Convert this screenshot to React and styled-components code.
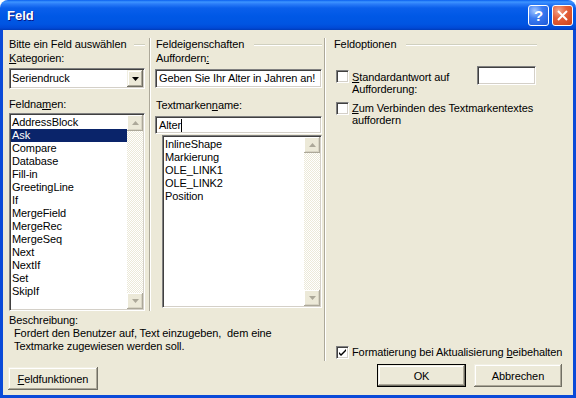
import React from 'react';
import styled, { createGlobalStyle, css } from 'styled-components';

const GlobalStyle = createGlobalStyle`
  html, body {
    margin: 0;
    padding: 0;
    background: #fff;
  }
  body {
    font-family: "Liberation Sans", Arial, sans-serif;
    font-size: 11px;
    letter-spacing: -0.1px;
    color: #000;
  }
  * {
    box-sizing: border-box;
  }
`;

// classic 3D edges
const sunken = css`
  border-style: solid;
  border-width: 1px;
  border-color: #808080 #fff #fff #808080;
  box-shadow: inset 1px 1px #404040, inset -1px -1px #d4d0c8;
  padding: 1px;
`;

const raised = css`
  background: #ece9d8;
  box-shadow: inset -1px -1px #716f64, inset 1px 1px #f1efe2,
    inset -2px -2px #aca899, inset 2px 2px #fff;
`;

const Window = styled.div`
  width: 576px;
  height: 398px;
  display: flex;
  flex-direction: column;
  border-radius: 8px 8px 0 0;
  overflow: hidden;
`;

const TitleBar = styled.div`
  height: 30px;
  flex-shrink: 0;
  display: flex;
  align-items: center;
  padding: 0 3px 0 7px;
  background: linear-gradient(
    to bottom,
    #0a5fef 0,
    #3d95ff 2px,
    #2a7cf8 4px,
    #0a5feb 8px,
    #0058e6 16px,
    #0055e2 24px,
    #0049d6 28px,
    #003bb8 30px
  );
`;

const Title = styled.div`
  flex: 1;
  color: #fff;
  font-weight: bold;
  font-size: 13px;
  letter-spacing: 0;
  text-shadow: 1px 1px #0a1883;
  margin-top: 1px;
`;

const CaptionButton = styled.div`
  width: 21px;
  height: 21px;
  margin-left: 3px;
  border: 1px solid #fff;
  border-radius: 3px;
  display: flex;
  align-items: center;
  justify-content: center;
  color: #fff;
  font-weight: bold;
  font-size: 15px;
  background: ${(p) =>
    p.$close
      ? 'radial-gradient(circle at 30% 25%, #f3a78d 0, #e5603a 40%, #c9411a 100%)'
      : 'radial-gradient(circle at 30% 25%, #a3c6ff 0, #3c7cf2 40%, #1b57d8 100%)'};
`;

const Body = styled.div`
  flex: 1;
  background: #ece9d8;
  border: 3px solid #0a4ad8;
  border-top: 0;
  padding: 8px 6px 0 6px;
  display: grid;
  grid-template-columns: 136px 10px 167px 12px 1fr;
  grid-template-rows: 273px 50px auto;
`;

const VSep = styled.div`
  grid-column: ${(p) => p.$col};
  grid-row: ${(p) => p.$rows};
  justify-self: start;
  margin-left: ${(p) => p.$offset}px;
  width: 2px;
  border-left: 1px solid #aca899;
  border-right: 1px solid #fff;
`;

const Column = styled.div`
  display: flex;
  flex-direction: column;
  grid-column: ${(p) => p.$col};
  grid-row: ${(p) => p.$rows || 1};
  min-width: 0;
`;

const GroupHeader = styled.div`
  display: flex;
  align-items: center;
  height: 13px;
  line-height: 13px;
  white-space: nowrap;
  padding-left: ${(p) => p.$pad || 0}px;
  margin-right: ${(p) => p.$trim || 0}px;

  &::after {
    content: '';
    flex: 1;
    margin-left: ${(p) => p.$gap}px;
    border-top: 1px solid #d0d0bf;
    border-bottom: 1px solid #fff;
  }
`;

const Label = styled.div`
  line-height: 13px;
  height: 13px;
  margin-top: ${(p) => p.$mt}px;
  padding-left: ${(p) => p.$pad || 0}px;
  white-space: nowrap;
`;

const Key = styled.span`
  text-decoration: underline;
  text-underline-offset: 1px;
`;

const Combo = styled.div`
  ${sunken};
  background: #fff;
  height: 21px;
  margin-top: 3px;
  display: flex;
`;

const ComboText = styled.div`
  flex: 1;
  line-height: 17px;
  padding-left: 1px;
`;

const DropButton = styled.div`
  ${raised};
  width: 16px;
  display: flex;
  align-items: center;
  justify-content: center;
`;

const TextField = styled.div`
  ${sunken};
  background: #fff;
  height: ${(p) => p.$h}px;
  width: ${(p) => (p.$w ? `${p.$w}px` : 'auto')};
  margin-top: ${(p) => p.$mt}px;
  margin-right: ${(p) => p.$mr || 0}px;
  line-height: ${(p) => p.$h - 4}px;
  padding-left: 3px;
  white-space: nowrap;
  overflow: hidden;
  flex-shrink: 0;
`;

const Caret = styled.span`
  display: inline-block;
  width: 1px;
  height: 13px;
  background: #000;
  vertical-align: -3px;
`;

const ListBox = styled.div`
  ${sunken};
  background: #fff;
  height: ${(p) => p.$h}px;
  margin-top: ${(p) => p.$mt}px;
  margin-left: ${(p) => p.$ml || 0}px;
  display: flex;
`;

const Items = styled.div`
  flex: 1;
  padding-top: 1px;
`;

const Item = styled.div`
  height: 13px;
  line-height: 13px;
  padding-left: ${(p) => p.$pad}px;
  white-space: nowrap;
  ${(p) =>
    p.$selected &&
    css`
      background: #0a246a;
      color: #fff;
    `}
`;

const ScrollBar = styled.div`
  width: 16px;
  display: flex;
  flex-direction: column;
`;

const ScrollButton = styled.div`
  height: 16px;
  background: #ece9d8;
  box-shadow: inset -1px -1px #aca899, inset 1px 1px #fff,
    inset -2px -2px #d8d4c4;
  display: flex;
  align-items: center;
  justify-content: center;
`;

const Track = styled.div`
  flex: 1;
  background: repeating-conic-gradient(#ece9d8 0 25%, #fff 0 50%) 0 0 / 2px
    2px;
`;

const Description = styled.div`
  grid-column: 1 / span 3;
  grid-row: 2;
  padding-top: 3px;
  line-height: 13px;
`;

const DescText = styled.div`
  padding-left: 5px;
  white-space: pre;
`;

const OptionRow = styled.div`
  display: flex;
  align-items: flex-start;
  margin-top: ${(p) => p.$mt};
  margin-bottom: ${(p) => p.$mb || 0}px;
  padding-left: 2px;
`;

const CheckBox = styled.div`
  ${sunken};
  width: 13px;
  height: 13px;
  padding: 0;
  background: #fff;
  flex-shrink: 0;
  margin-top: ${(p) => p.$mt || 0}px;
  display: flex;
  align-items: center;
  justify-content: center;
`;

const OptionText = styled.div`
  flex: 1;
  margin-left: 3px;
  margin-top: ${(p) => p.$mt || 0}px;
  line-height: ${(p) => p.$lh}px;
  white-space: nowrap;
`;

const ButtonRow = styled.div`
  grid-column: 1 / -1;
  grid-row: 3;
  display: flex;
  align-items: flex-start;
`;

const Button = styled.div`
  ${raised};
  width: ${(p) => p.$w}px;
  height: 23px;
  margin-top: ${(p) => p.$mt}px;
  margin-left: ${(p) => p.$ml || 0}px;
  margin-right: ${(p) => p.$mr || 0}px;
  display: flex;
  align-items: center;
  justify-content: center;
  ${(p) =>
    p.$default &&
    css`
      border: 1px solid #000;
    `}
`;

const Spacer = styled.div`
  flex: 1;
`;

const Arrow = ({ down, color }) => (
  <svg width="7" height="4" viewBox="0 0 7 4">
    <path d={down ? 'M0 0h7L3.5 4z' : 'M0 4h7L3.5 0z'} fill={color} />
  </svg>
);

const Scroller = () => (
  <ScrollBar>
    <ScrollButton>
      <Arrow color="#aca899" />
    </ScrollButton>
    <Track />
    <ScrollButton>
      <Arrow down color="#aca899" />
    </ScrollButton>
  </ScrollBar>
);

const Check = () => (
  <svg width="9" height="9" viewBox="0 0 9 9">
    <path d="M1 4l2 2 5-5v2L3 8 1 6z" fill="#000" />
  </svg>
);

const fieldNames = [
  'AddressBlock',
  'Ask',
  'Compare',
  'Database',
  'Fill-in',
  'GreetingLine',
  'If',
  'MergeField',
  'MergeRec',
  'MergeSeq',
  'Next',
  'NextIf',
  'Set',
  'SkipIf',
];

const bookmarks = ['InlineShape', 'Markierung', 'OLE_LINK1', 'OLE_LINK2', 'Position'];

const App = () => (
  <>
    <GlobalStyle />
    <Window>
      <TitleBar>
        <Title>Feld</Title>
        <CaptionButton>?</CaptionButton>
        <CaptionButton $close>
          <svg width="11" height="11" viewBox="0 0 11 11">
            <path d="M1 1l9 9M10 1l-9 9" stroke="#fff" strokeWidth="2" />
          </svg>
        </CaptionButton>
      </TitleBar>
      <Body>
        <Column $col={1}>
          <GroupHeader $gap={8}>Bitte ein Feld auswählen</GroupHeader>
          <Label $mt={1}>
            <Key>K</Key>ategorien:
          </Label>
          <Combo>
            <ComboText>Seriendruck</ComboText>
            <DropButton>
              <Arrow down color="#000" />
            </DropButton>
          </Combo>
          <Label $mt={9}>
            Feldna<Key>m</Key>en:
          </Label>
          <ListBox $mt={2} $h={198}>
            <Items>
              {fieldNames.map((n) => (
                <Item key={n} $pad={1} $selected={n === 'Ask'}>
                  {n}
                </Item>
              ))}
            </Items>
            <Scroller />
          </ListBox>
        </Column>
        <VSep $col={2} $rows="1" $offset={4} />
        <Column $col={3}>
          <GroupHeader $gap={10} $pad={1}>
            Feldeigenschaften
          </GroupHeader>
          <Label $mt={1} $pad={1}>
            Auffordern<Key>:</Key>
          </Label>
          <TextField $h={19} $mt={4}>
            Geben Sie Ihr Alter in Jahren an!
          </TextField>
          <Label $mt={11} $pad={1}>
            Textmarken<Key>n</Key>ame:
          </Label>
          <TextField $h={18} $mt={4}>
            Alter
            <Caret />
          </TextField>
          <ListBox $mt={1} $h={173} $ml={7}>
            <Items>
              {bookmarks.map((n) => (
                <Item key={n} $pad={1}>
                  {n}
                </Item>
              ))}
            </Items>
            <Scroller />
          </ListBox>
        </Column>
        <VSep $col={4} $rows="1 / span 2" $offset={2} />
        <Column $col={5} $rows="1 / span 2">
          <GroupHeader $gap={10} $trim={30}>
            Feldoptionen
          </GroupHeader>
          <OptionRow $mt="15px">
            <CheckBox $mt={4} />
            <OptionText $mt={5} $lh={12}>
              <Key>S</Key>tandardantwort auf
              <br />
              Aufforderung:
            </OptionText>
            <TextField $h={19} $w={59} $mt={0} $mr={31} />
          </OptionRow>
          <OptionRow $mt="7px">
            <CheckBox $mt={0} />
            <OptionText $lh={12}>
              <Key>Z</Key>um Verbinden des Textmarkentextes
              <br />
              auffordern
            </OptionText>
          </OptionRow>
          <OptionRow $mt="auto" $mb={2}>
            <CheckBox>
              <Check />
            </CheckBox>
            <OptionText $lh={13}>
              Formatierung bei Aktualisierung <Key>b</Key>eibehalten
            </OptionText>
          </OptionRow>
        </Column>
        <Description>
          Beschreibung:
          <DescText>
            {'Fordert den Benutzer auf, Text einzugeben,  dem eine\nTextmarke zugewiesen werden soll.'}
          </DescText>
        </Description>
        <ButtonRow>
          <Button $w={90} $mt={6} $ml={-1}>
            <span>
              <Key>F</Key>eldfunktionen
            </span>
          </Button>
          <Spacer />
          <Button $w={89} $mt={3} $default>
            OK
          </Button>
          <Button $w={88} $mt={3} $ml={8} $mr={5}>
            Abbrechen
          </Button>
        </ButtonRow>
      </Body>
    </Window>
  </>
);

export default App;
